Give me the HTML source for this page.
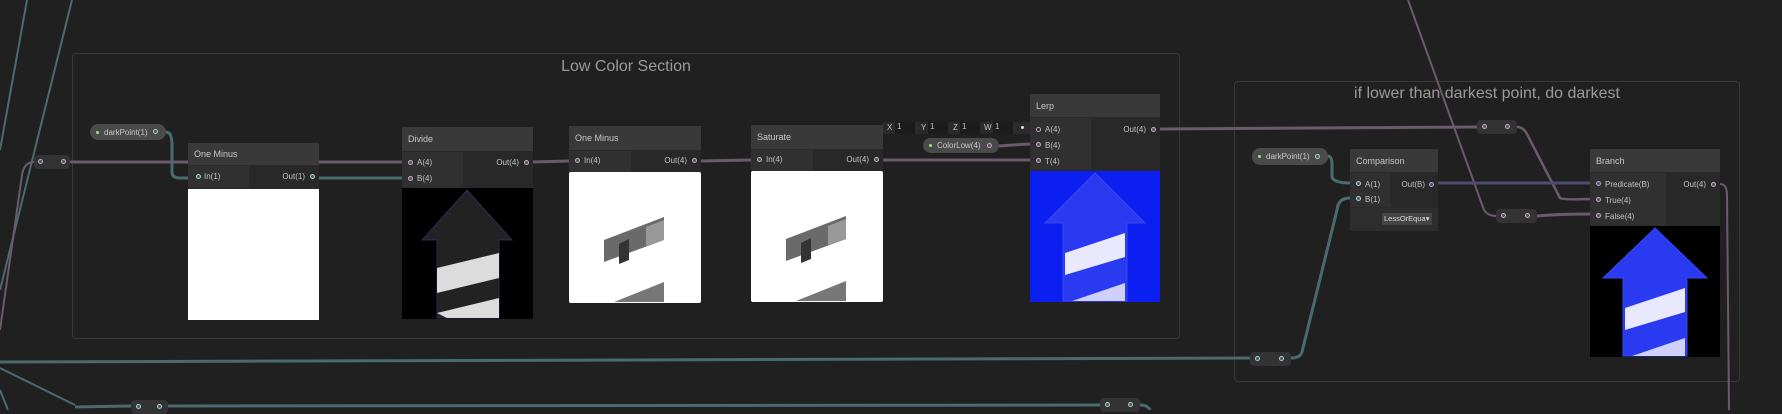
<!DOCTYPE html>
<html><head><meta charset="utf-8"><style>
body{margin:0;width:1782px;height:410px;background:#202020;overflow:hidden;position:relative;font-family:"Liberation Sans",sans-serif;}
.abs{position:absolute}
.grp{position:absolute;border:1px solid #383838;border-radius:4px}
.gt{position:absolute;left:0;right:0;text-align:center;color:#9a9a9a;font-size:16px}
.node{position:absolute;background:#2a2a2a}
.hd{position:absolute;left:0;right:0;top:0;background:#393939;color:#c8c8c8;font-size:9px;padding-left:6px;box-sizing:border-box;display:flex;align-items:center}
.in{position:absolute;left:0;background:#303030}
.out{position:absolute;right:0;background:#282828}
.lbl{position:absolute;color:#c4c4c4;font-size:8px;white-space:nowrap}
.pt{position:absolute;width:5px;height:5px;border-radius:50%;box-sizing:border-box;border:1.5px solid #c8a8c8;background:#555}
.pt.t{border-color:#9fd8d8}
.pill{position:absolute;background:#4a4a4a;border-radius:8px;color:#c8c8c8;font-size:8px;display:flex;align-items:center;padding-left:14px;box-sizing:border-box}
.pill:before{content:"";position:absolute;left:6px;top:50%;margin-top:-1.5px;width:3px;height:3px;background:#9be07a;border-radius:50%}
.rr{position:absolute;background:#333;border-radius:4px}
</style></head><body>
<div class="grp" style="left:72px;top:53px;width:1106px;height:284px"><div class="gt" style="top:4px">Low Color Section</div></div>
<div class="grp" style="left:1234px;top:81px;width:504px;height:299px"><div class="gt" style="top:3px">if lower than darkest point, do darkest</div></div>

<svg class="abs" style="left:0;top:0" width="1782" height="410">
<g fill="none" stroke-width="3">
<path d="M27 0 L0 150" stroke="#4a6b6d" stroke-width="2"/>
<path d="M72 0 L0 290" stroke="#4a6b6d" stroke-width="2"/>
<path d="M34 162 Q24 162 22 175 L0 330" stroke="#6a5a6c" stroke-width="2"/>
<path d="M70 162 L402 162" stroke="#6a5a6c"/>
<path d="M166 132 Q172 132 172 145 L172 172 Q172 178 180 178 L188 178" stroke="#4a6b6d"/>
<path d="M319 178 L402 178" stroke="#4a6b6d"/>
<path d="M533 162 L569 161" stroke="#6a5a6c"/>
<path d="M701 161 L751 160" stroke="#6a5a6c"/>
<path d="M883 160 L1030 160" stroke="#6a5a6c"/>
<path d="M999 146 Q1010 145 1030 144" stroke="#6a5a6c"/>
<path d="M1160 129 L1477 127" stroke="#6a5a6c"/>
<path d="M1517 127 Q1524 127 1528 136 L1560 198 Q1563 200 1590 199" stroke="#6a5a6c" stroke-width="2.5"/>
<path d="M1408 0 L1484 210 Q1488 216 1496 216" stroke="#6a5a6c" stroke-width="2"/>
<path d="M1537 216 Q1560 214 1590 214" stroke="#6a5a6c"/>
<path d="M1438 183 L1590 183" stroke="#4e4a70"/>
<path d="M1328 156 Q1332 156 1332 165 L1332 177 Q1334 183 1350 183" stroke="#4a6b6d"/>
<path d="M1350 198 Q1338 198 1337 210 L1302 352 Q1300 358 1291 358" stroke="#4a6b6d"/>
<path d="M0 362 L1250 358" stroke="#4a6b6d"/>
<path d="M0 368 L75 405" stroke="#4a6b6d" stroke-width="2"/>
<path d="M0 390 L8 410" stroke="#4a6b6d" stroke-width="2"/>
<path d="M75 407 L131 406" stroke="#4a6b6d"/>
<path d="M168 406 L1100 405" stroke="#4a6b6d"/>
<path d="M1140 405 Q1148 405 1150 410" stroke="#4a6b6d"/>
<path d="M1720 184 Q1727 184 1727 195 L1729 410" stroke="#6a5a6c" stroke-width="2"/>
</g>
</svg>

<!-- reroutes -->
<div class="rr" style="left:34px;top:155px;width:36px;height:14px"><div class="pt" style="left:4px;top:4px"></div><div class="pt" style="left:27px;top:4px"></div></div>
<div class="rr" style="left:1477px;top:120px;width:40px;height:14px"><div class="pt" style="left:5px;top:4px"></div><div class="pt" style="left:28px;top:4px"></div></div>
<div class="rr" style="left:1496px;top:209px;width:41px;height:14px"><div class="pt" style="left:5px;top:4px"></div><div class="pt" style="left:29px;top:4px"></div></div>
<div class="rr" style="left:1250px;top:352px;width:41px;height:14px"><div class="pt t" style="left:5px;top:4px"></div><div class="pt t" style="left:29px;top:4px"></div></div>
<div class="rr" style="left:131px;top:400px;width:37px;height:14px"><div class="pt t" style="left:5px;top:4px"></div><div class="pt t" style="left:26px;top:4px"></div></div>
<div class="rr" style="left:1100px;top:398px;width:40px;height:14px"><div class="pt t" style="left:5px;top:4px"></div><div class="pt t" style="left:28px;top:4px"></div></div>

<div class="pill" style="left:90px;top:124px;width:76px;height:16px">darkPoint(1)<div class="pt t" style="left:63px;top:5px"></div></div>
<div class="pill" style="left:1252px;top:148px;width:76px;height:17px">darkPoint(1)<div class="pt t" style="left:63px;top:6px"></div></div>
<div class="pill" style="left:923px;top:138px;width:76px;height:15px">ColorLow(4)<div class="pt" style="left:64px;top:5px"></div></div>

<!-- One Minus 1 -->
<div class="node" style="left:188px;top:143px;width:131px;height:177px">
<div class="hd" style="height:22px">One Minus</div>
<div class="in" style="top:23px;height:22px;width:61px"></div><div class="out" style="top:23px;height:22px;width:69px"></div>
<div class="pt t" style="left:8px;top:31px"></div><div class="lbl" style="left:16px;top:29px">In(1)</div>
<div class="lbl" style="right:14px;top:29px">Out(1)</div><div class="pt t" style="right:4px;top:31px"></div>
<div class="abs" style="left:0;top:46px;width:131px;height:131px;background:#fff"></div></div>

<!-- Divide -->
<div class="node" style="left:402px;top:127px;width:131px;height:192px">
<div class="hd" style="height:24px">Divide</div>
<div class="in" style="top:25px;height:35px;width:61px"></div><div class="out" style="top:25px;height:35px;width:69px"></div>
<div class="pt" style="left:6px;top:33px"></div><div class="lbl" style="left:15px;top:31px">A(4)</div>
<div class="pt" style="left:6px;top:49px"></div><div class="lbl" style="left:15px;top:47px">B(4)</div>
<div class="lbl" style="right:14px;top:31px">Out(4)</div><div class="pt" style="right:4px;top:33px"></div>
<svg class="abs" style="left:0;top:61px" width="131" height="131"><rect width="131" height="131" fill="#000"/>
<polygon points="65,2 20,52 35,52 35,130 97,130 97,52 110,52" fill="#232223" stroke="#2a2a55"/>
<polygon points="35,80 97,65 97,90 35,105" fill="#dcdcdc"/><polygon points="35,125 97,110 97,130 45,130" fill="#dcdcdc"/></svg></div>

<!-- One Minus 2 -->
<div class="node" style="left:569px;top:126px;width:132px;height:177px">
<div class="hd" style="height:24px">One Minus</div>
<div class="in" style="top:25px;height:21px;width:62px"></div><div class="out" style="top:25px;height:21px;width:70px"></div>
<div class="pt" style="left:6px;top:32px"></div><div class="lbl" style="left:15px;top:30px">In(4)</div>
<div class="lbl" style="right:14px;top:30px">Out(4)</div><div class="pt" style="right:4px;top:32px"></div>
<svg class="abs" style="left:0;top:46px" width="132" height="131"><rect width="132" height="131" fill="#fff" rx="2"/>
<polygon points="35,68 95,45 95,68 35,90" fill="#6a6a6a"/><polygon points="50,72 60,67 60,88 50,92" fill="#333"/><polygon points="77,55 95,48 95,68 77,74" fill="#999"/>
<polygon points="45,130 95,110 95,130" fill="#777"/></svg></div>

<!-- Saturate -->
<div class="node" style="left:751px;top:125px;width:132px;height:177px">
<div class="hd" style="height:24px">Saturate</div>
<div class="in" style="top:25px;height:21px;width:62px"></div><div class="out" style="top:25px;height:21px;width:70px"></div>
<div class="pt" style="left:6px;top:32px"></div><div class="lbl" style="left:15px;top:30px">In(4)</div>
<div class="lbl" style="right:14px;top:30px">Out(4)</div><div class="pt" style="right:4px;top:32px"></div>
<svg class="abs" style="left:0;top:46px" width="132" height="131"><rect width="132" height="131" fill="#fff" rx="2"/>
<polygon points="35,68 95,45 95,68 35,90" fill="#6a6a6a"/><polygon points="50,72 60,67 60,88 50,92" fill="#333"/><polygon points="77,55 95,48 95,68 77,74" fill="#999"/>
<polygon points="45,130 95,110 95,130" fill="#777"/></svg></div>

<!-- vector input -->
<div class="abs" style="left:883px;top:122px;width:147px;height:12px;background:#2a2a2a;font-size:8px;color:#c4c4c4">
<span class="abs" style="left:4px;top:1px">X</span><span class="abs" style="left:12px;top:0;width:20px;height:12px;background:#1c1c1c;padding-left:2px;box-sizing:border-box">1</span>
<span class="abs" style="left:38px;top:1px">Y</span><span class="abs" style="left:45px;top:0;width:20px;height:12px;background:#1c1c1c;padding-left:2px;box-sizing:border-box">1</span>
<span class="abs" style="left:70px;top:1px">Z</span><span class="abs" style="left:77px;top:0;width:20px;height:12px;background:#1c1c1c;padding-left:2px;box-sizing:border-box">1</span>
<span class="abs" style="left:101px;top:1px">W</span><span class="abs" style="left:110px;top:0;width:20px;height:12px;background:#1c1c1c;padding-left:2px;box-sizing:border-box">1</span>
<span class="abs" style="left:138px;top:4px;width:3px;height:3px;background:#ddd;border-radius:50%"></span></div>

<!-- Lerp -->
<div class="node" style="left:1030px;top:94px;width:130px;height:208px">
<div class="hd" style="height:23px">Lerp</div>
<div class="in" style="top:24px;height:52px;width:61px"></div><div class="out" style="top:24px;height:52px;width:68px"></div>
<div class="pt" style="left:6px;top:33px;background:#222"></div><div class="lbl" style="left:15px;top:31px">A(4)</div>
<div class="pt" style="left:6px;top:48px"></div><div class="lbl" style="left:15px;top:47px">B(4)</div>
<div class="pt" style="left:6px;top:64px"></div><div class="lbl" style="left:15px;top:63px">T(4)</div>
<div class="lbl" style="right:14px;top:31px">Out(4)</div><div class="pt" style="right:4px;top:33px"></div>
<svg class="abs" style="left:0;top:77px" width="130" height="131"><rect width="130" height="131" fill="#0a1ff0"/>
<polygon points="65,2 15,52 33,52 33,130 97,130 97,52 115,52" fill="#2a3af0" stroke="#3848f0"/>
<polygon points="35,82 95,62 95,86 35,104" fill="#e8e8ff"/><polygon points="42,130 95,112 95,130" fill="#d0d0ff"/></svg></div>

<!-- Comparison -->
<div class="node" style="left:1350px;top:149px;width:88px;height:82px">
<div class="hd" style="height:23px">Comparison</div>
<div class="in" style="top:24px;height:34px;width:40px"></div><div class="out" style="top:24px;height:34px;width:47px"></div>
<div class="pt t" style="left:6px;top:32px"></div><div class="lbl" style="left:15px;top:31px">A(1)</div>
<div class="pt t" style="left:6px;top:47px"></div><div class="lbl" style="left:15px;top:46px">B(1)</div>
<div class="lbl" style="right:13px;top:31px">Out(B)</div><div class="pt" style="right:4px;top:33px;border-color:#a8a0e8"></div>
<div class="abs" style="left:0;top:59px;width:88px;height:23px;background:#2d2d2d"><div class="abs" style="left:32px;top:5px;width:50px;height:12px;background:#444;color:#ddd;font-size:7.5px;line-height:12px;padding-left:2px;box-sizing:border-box;overflow:hidden">LessOrEqua▾</div></div></div>

<!-- Branch -->
<div class="node" style="left:1590px;top:149px;width:130px;height:208px">
<div class="hd" style="height:23px">Branch</div>
<div class="in" style="top:24px;height:52px;width:76px"></div><div class="out" style="top:24px;height:52px;width:53px"></div>
<div class="pt" style="left:6px;top:32px;border-color:#a8a0e8"></div><div class="lbl" style="left:15px;top:31px">Predicate(B)</div>
<div class="pt" style="left:6px;top:48px"></div><div class="lbl" style="left:15px;top:47px">True(4)</div>
<div class="pt" style="left:6px;top:64px"></div><div class="lbl" style="left:15px;top:63px">False(4)</div>
<div class="lbl" style="right:14px;top:31px">Out(4)</div><div class="pt" style="right:4px;top:33px"></div>
<svg class="abs" style="left:0;top:77px" width="130" height="131"><rect width="130" height="131" fill="#000"/>
<polygon points="65,2 13,52 33,52 33,130 97,130 97,52 117,52" fill="#2a3af0" stroke="#3848f0"/>
<polygon points="35,82 95,62 95,86 35,104" fill="#e8e8ff"/><polygon points="42,130 95,112 95,130" fill="#d0d0ff"/></svg></div>
</body></html>
